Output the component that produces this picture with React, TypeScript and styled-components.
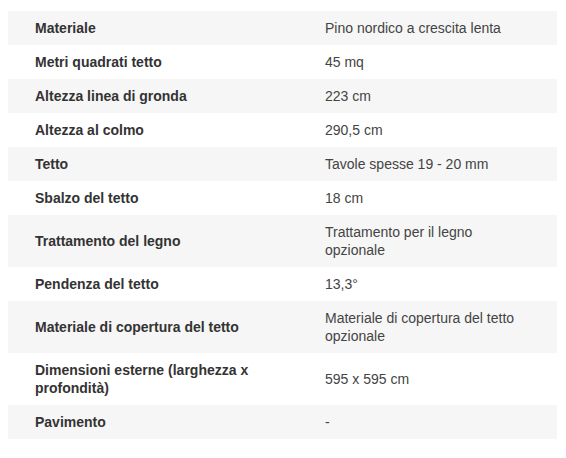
import React from 'react';
import styled, { createGlobalStyle } from 'styled-components';

const GlobalStyle = createGlobalStyle`
  body {
    margin: 0;
    background: #ffffff;
    font-family: "Liberation Sans", Arial, Helvetica, sans-serif;
  }
`;

const specs: [string, string][] = [
  ['Materiale', 'Pino nordico a crescita lenta'],
  ['Metri quadrati tetto', '45 mq'],
  ['Altezza linea di gronda', '223 cm'],
  ['Altezza al colmo', '290,5 cm'],
  ['Tetto', 'Tavole spesse 19 - 20 mm'],
  ['Sbalzo del tetto', '18 cm'],
  ['Trattamento del legno', 'Trattamento per il legno opzionale'],
  ['Pendenza del tetto', '13,3°'],
  ['Materiale di copertura del tetto', 'Materiale di copertura del tetto opzionale'],
  ['Dimensioni esterne (larghezza x profondità)', '595 x 595 cm'],
  ['Pavimento', '-'],
];

const App = () => {
  return (
    <>
      <GlobalStyle />
      <Wrapper>
        <SpecTable>
          <colgroup>
            <col style={{ width: 290 }} />
            <col />
          </colgroup>
          <tbody>
            {specs.map(([label, value]) => (
              <Row key={label}>
                <Label>{label}</Label>
                <Value>{value}</Value>
              </Row>
            ))}
          </tbody>
        </SpecTable>
      </Wrapper>
    </>
  );
};

export default App;

const Wrapper = styled.div`
  padding: 11px 9px 0 8px;
`;

const SpecTable = styled.table`
  width: 549px;
  border-collapse: collapse;
  table-layout: fixed;
  font-size: 14px;
  line-height: 18px;
  color: #333333;
`;

const Row = styled.tr`
  background: #ffffff;
  &:nth-child(odd) {
    background: #f6f6f6;
  }
`;

const Label = styled.td`
  box-sizing: border-box;
  padding: 8px 27px;
  font-weight: 700;
  vertical-align: middle;
`;

const Value = styled.td`
  box-sizing: border-box;
  padding: 8px 27px;
  color: #444444;
  vertical-align: middle;
`;
